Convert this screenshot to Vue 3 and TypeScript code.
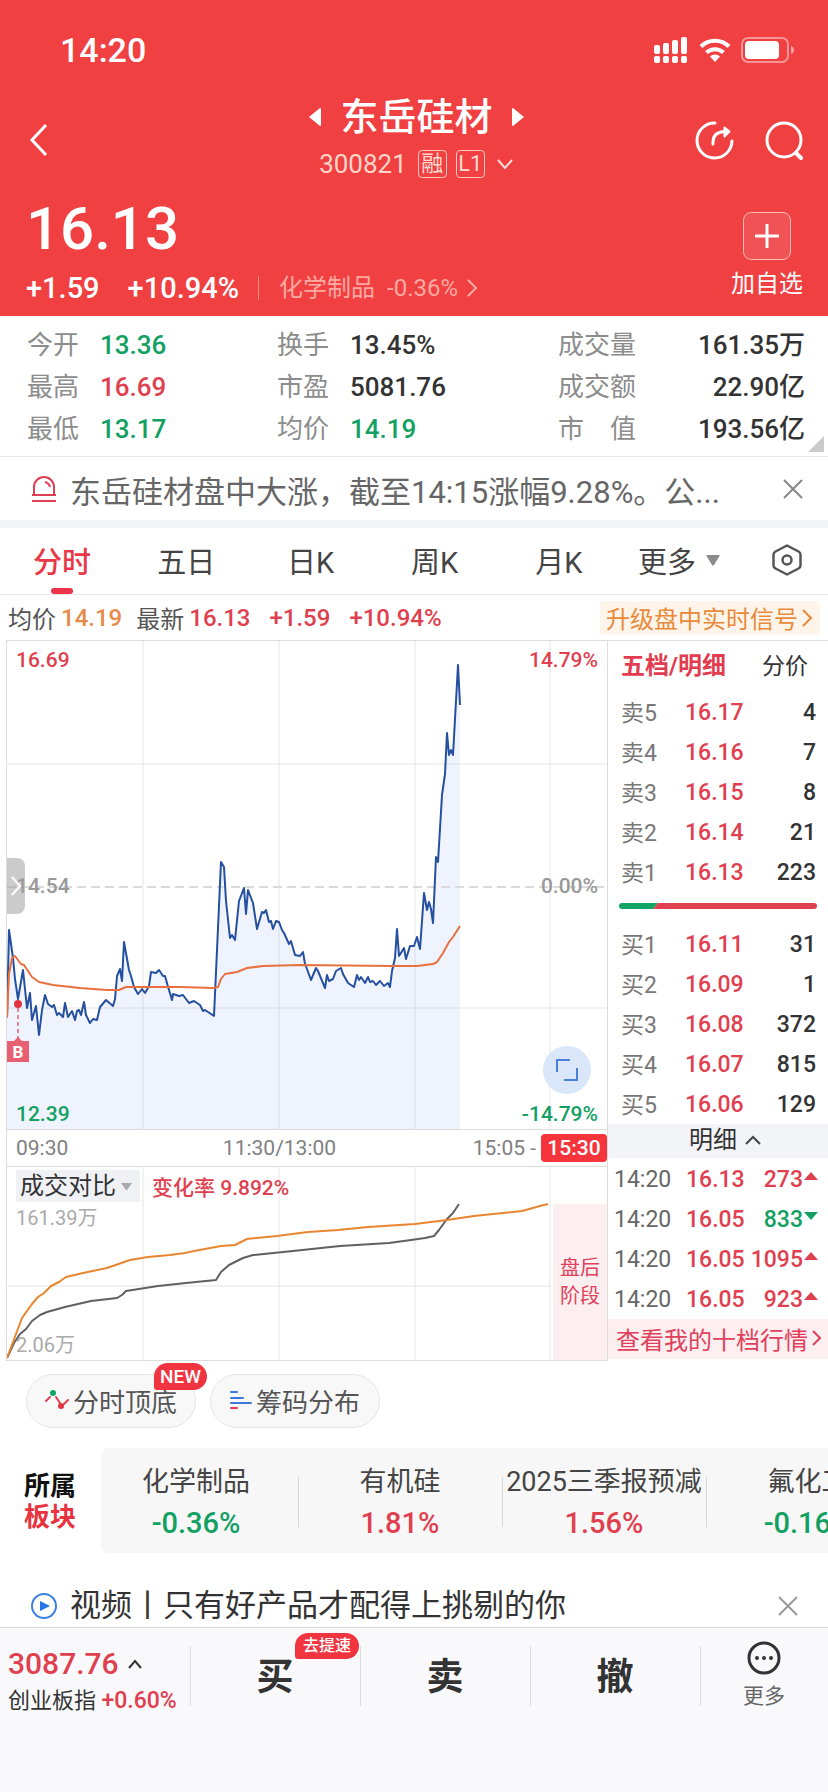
<script setup lang="ts">
import { computed, ref } from 'vue'

type Tone = 'up' | 'down' | 'plain'
type Point = [number, number]

interface Stat { label: string; value: string; tone: Tone }
interface Level { label: string; price: string; volume: string }
interface Trade { time: string; price: string; volume: string; tone: Tone }
interface Board { name: string; change: string; tone: Tone }

const stats: Stat[] = [
  { label: '今开', value: '13.36', tone: 'down' },
  { label: '换手', value: '13.45%', tone: 'plain' },
  { label: '成交量', value: '161.35万', tone: 'plain' },
  { label: '最高', value: '16.69', tone: 'up' },
  { label: '市盈', value: '5081.76', tone: 'plain' },
  { label: '成交额', value: '22.90亿', tone: 'plain' },
  { label: '最低', value: '13.17', tone: 'down' },
  { label: '均价', value: '14.19', tone: 'down' },
  { label: '市　值', value: '193.56亿', tone: 'plain' },
]

const tabs = ['分时', '五日', '日K', '周K', '月K']
const activeTab = ref('分时')

const sells: Level[] = [
  { label: '卖5', price: '16.17', volume: '4' },
  { label: '卖4', price: '16.16', volume: '7' },
  { label: '卖3', price: '16.15', volume: '8' },
  { label: '卖2', price: '16.14', volume: '21' },
  { label: '卖1', price: '16.13', volume: '223' },
]
const buys: Level[] = [
  { label: '买1', price: '16.11', volume: '31' },
  { label: '买2', price: '16.09', volume: '1' },
  { label: '买3', price: '16.08', volume: '372' },
  { label: '买4', price: '16.07', volume: '815' },
  { label: '买5', price: '16.06', volume: '129' },
]
const trades: Trade[] = [
  { time: '14:20', price: '16.13', volume: '273', tone: 'up' },
  { time: '14:20', price: '16.05', volume: '833', tone: 'down' },
  { time: '14:20', price: '16.05', volume: '1095', tone: 'up' },
  { time: '14:20', price: '16.05', volume: '923', tone: 'up' },
]
const boards: Board[] = [
  { name: '化学制品', change: '-0.36%', tone: 'down' },
  { name: '有机硅', change: '1.81%', tone: 'up' },
  { name: '2025三季报预减', change: '1.56%', tone: 'up' },
  { name: '氟化工', change: '-0.16%', tone: 'down' },
]

const price: Point[] = [
  [0, 377], [2, 289], [6, 317], [8, 338], [11, 358], [16, 329], [20, 367], [23, 352], [25, 379], [29, 365],
  [32, 394], [35, 369], [38, 354], [41, 363], [45, 366], [47, 364], [50, 374], [52, 372], [56, 376], [58, 362],
  [61, 376], [65, 370], [68, 379], [70, 370], [72, 369], [74, 374], [77, 361], [79, 374], [83, 382], [86, 378],
  [90, 379], [93, 366], [99, 359], [106, 365], [108, 358], [110, 335], [113, 328], [115, 340], [117, 301],
  [122, 329], [124, 335], [127, 346], [131, 353], [135, 348], [138, 352], [142, 345], [144, 331], [149, 332],
  [152, 329], [156, 335], [158, 335], [162, 349], [165, 359], [166, 353], [172, 355], [176, 354], [182, 362],
  [187, 360], [193, 364], [196, 370], [198, 369], [207, 375], [214, 221], [217, 226], [219, 260], [223, 297],
  [225, 294], [228, 299], [232, 260], [237, 247], [239, 273], [241, 249], [246, 262], [250, 288], [255, 271],
  [257, 272], [259, 269], [262, 281], [264, 280], [266, 288], [269, 280], [272, 281], [275, 289], [277, 292],
  [282, 303], [284, 300], [288, 314], [293, 315], [296, 311], [298, 323], [300, 328], [304, 339], [309, 327],
  [311, 330], [318, 347], [320, 334], [322, 340], [326, 338], [329, 330], [334, 327], [336, 333], [341, 342],
  [347, 346], [350, 334], [352, 339], [354, 336], [358, 342], [361, 336], [363, 341], [366, 340], [369, 344],
  [373, 340], [377, 345], [381, 342], [383, 346], [385, 330], [388, 317], [390, 288], [392, 315], [397, 307],
  [399, 318], [403, 305], [407, 305], [410, 296], [413, 308], [417, 252], [420, 269], [422, 261], [424, 268],
  [426, 282], [429, 216], [431, 221], [435, 154], [438, 133], [440, 92], [442, 114], [444, 109], [446, 114],
  [451, 24], [453, 64],
]
const average: Point[] = [
  [0, 377], [2, 333], [5, 317], [8, 315], [14, 323], [17, 324], [25, 336], [32, 341], [46, 344], [73, 347],
  [100, 349], [112, 349], [119, 346], [143, 346], [173, 346], [206, 347], [211, 346], [214, 338], [218, 333],
  [230, 331], [240, 327], [256, 325], [293, 324], [386, 325], [410, 325], [426, 323], [430, 321], [436, 312],
  [442, 301], [446, 296], [453, 285],
]
const yesterday: Point[] = [
  [0, 191], [9, 167], [15, 151], [25, 137], [31, 130], [37, 126], [44, 119], [52, 115], [59, 110], [76, 106],
  [100, 101], [123, 93], [141, 90], [163, 88], [178, 86], [187, 84], [214, 79], [228, 78], [240, 72], [270, 69],
  [301, 65], [331, 63], [361, 60], [408, 57], [440, 53], [467, 49], [515, 44], [533, 39], [541, 37],
]
const today: Point[] = [
  [0, 191], [7, 176], [13, 167], [19, 162], [25, 154], [33, 148], [40, 145], [58, 140], [84, 134], [110, 131],
  [115, 128], [119, 124], [151, 119], [179, 116], [209, 113], [214, 105], [222, 98], [236, 91], [246, 88],
  [286, 84], [333, 79], [382, 76], [404, 73], [418, 71], [427, 69], [432, 63], [440, 52], [446, 46], [452, 37],
]

const toPoints = (list: Point[]): string => list.map((p) => p.join(',')).join(' ')
const areaPoints = computed(() => `0,488 ${toPoints(price)} 453,488`)
const showNews = ref(true)
const showVideo = ref(true)
const compare = ref('成交对比')
</script>

<template>
  <div class="page">
    <header class="top">
      <div class="status">
        <span class="clock">14:20</span>
        <div class="status-icons">
          <svg width="35" height="26" viewBox="0 0 35 26" fill="#fff">
            <rect x="0" y="8" width="6" height="9" rx="2" /><rect x="9" y="6" width="6" height="11" rx="2" />
            <rect x="18" y="3" width="6" height="14" rx="2" /><rect x="27" y="0" width="6" height="17" rx="2" />
            <rect x="0" y="19" width="6" height="7" rx="2" /><rect x="9" y="19" width="6" height="7" rx="2" />
            <rect x="18" y="19" width="6" height="7" rx="2" /><rect x="27" y="19" width="6" height="7" rx="2" />
          </svg>
          <svg width="32" height="24" viewBox="0 0 32 24" fill="none" stroke="#fff" stroke-width="4">
            <path d="M2 8.500a20 20 0 0 1 28 0" /><path d="M7.500 14.500a12.500 12.500 0 0 1 17 0" />
            <path d="M16 24l-5-5.500a7.500 7.500 0 0 1 10 0z" fill="#fff" stroke="none" />
          </svg>
          <svg width="53" height="26" viewBox="0 0 53 26">
            <rect x="1" y="1" width="46" height="24" rx="6" fill="none" stroke="#fff" stroke-opacity=".45" stroke-width="2" />
            <rect x="4" y="4" width="34" height="18" rx="4" fill="#fff" />
            <path d="M50 9q3 1 3 4t-3 4z" fill="#fff" fill-opacity=".5" />
          </svg>
        </div>
      </div>

      <nav class="nav">
        <button class="bare" aria-label="返回">
          <svg width="20" height="34" viewBox="0 0 20 34" fill="none" stroke="#fff" stroke-width="3"><path d="M17 2L3 17l14 15" /></svg>
        </button>
        <div class="titles">
          <div class="name-row">
            <button class="bare" aria-label="上一只">
              <svg width="14" height="20" viewBox="0 0 14 20" fill="#fff"><path d="M12 1L1 10l11 9q1 0 1-1V2q0-1-1-1z" /></svg>
            </button>
            <h1>东岳硅材</h1>
            <button class="bare" aria-label="下一只">
              <svg width="14" height="20" viewBox="0 0 14 20" fill="#fff"><path d="M2 1l11 9-11 9q-1 0-1-1V2q0-1 1-1z" /></svg>
            </button>
          </div>
          <div class="code-row">
            <span class="code">300821</span><span class="tag">融</span><span class="tag">L1</span>
            <svg class="code-arrow" width="18" height="12" viewBox="0 0 18 12" fill="none" stroke="#fff" stroke-opacity=".8" stroke-width="2"><path d="M2 2l7 8 7-8" /></svg>
          </div>
        </div>
        <div class="nav-actions">
          <button class="bare" aria-label="分享">
            <svg width="40" height="40" viewBox="0 0 40 40" fill="none" stroke="#fff" stroke-width="3" stroke-linecap="round" stroke-linejoin="round">
              <path d="M20 3A17.500 17.500 0 1 0 37 21" /><path d="M18 24v-2q0-10 12-10.500" /><path d="M29.500 7.500l5 4-5 5z" fill="#fff" stroke-width="2" />
            </svg>
          </button>
          <button class="bare" aria-label="搜索">
            <svg width="40" height="40" viewBox="0 0 40 40" fill="none" stroke="#fff" stroke-width="3" stroke-linecap="round">
              <circle cx="20" cy="20" r="17" /><path d="M32 33l5 5" stroke-width="4" />
            </svg>
          </button>
        </div>
      </nav>

      <div class="quote">
        <div class="quote-main">
          <div class="last">16.13</div>
          <div class="change-row">
            <span class="delta">+1.59</span><span class="delta">+10.94%</span>
            <a class="sector" href="#sector"><span>化学制品</span><span>-0.36%</span>
              <svg width="12" height="20" viewBox="0 0 12 20" fill="none" stroke="currentColor" stroke-width="2"><path d="M2 2l8 8-8 8" /></svg>
            </a>
          </div>
        </div>
        <button class="bare watch">
          <span class="plus"><svg width="24" height="24" viewBox="0 0 24 24" stroke="#fff" stroke-width="3" stroke-linecap="round"><path d="M12 1v22M1 12h22" /></svg></span>
          <span>加自选</span>
        </button>
      </div>
    </header>

    <section class="stats">
      <dl v-for="s in stats" :key="s.label" class="stat">
        <dt>{{ s.label }}</dt>
        <dd :class="s.tone">{{ s.value }}</dd>
      </dl>
      <svg class="corner" width="16" height="16" viewBox="0 0 16 16"><path d="M16 0v16H0z" fill="#cacaca" /></svg>
    </section>

    <section v-if="showNews" class="notice news">
      <svg width="26" height="28" viewBox="0 0 26 28" fill="none" stroke="#df3f55" stroke-width="2">
        <path d="M3 20V12a10 10 0 0 1 20 0v8z" /><path d="M1 26h24M1 20h24" /><path d="M14 7q4 1 5 5" />
      </svg>
      <a class="notice-text" href="#news">东岳硅材盘中大涨，截至14:15涨幅9.28%。公...</a>
      <button class="bare" aria-label="关闭" @click="showNews = false">
        <svg width="20" height="20" viewBox="0 0 20 20" stroke="#888" stroke-width="2"><path d="M1 1l18 18M19 1L1 19" /></svg>
      </button>
    </section>

    <nav class="tabs">
      <button v-for="t in tabs" :key="t" class="bare tab" :class="{ active: t === activeTab }" @click="activeTab = t">{{ t }}</button>
      <button class="bare tab more-tab">更多<svg width="14" height="11" viewBox="0 0 14 11" fill="#8c8c8c"><path d="M1 0h12q1 0 .5 1L8 10q-1 1-2 0L.5 1Q0 0 1 0z" /></svg></button>
      <button class="bare tab" aria-label="设置">
        <svg width="30" height="32" viewBox="0 0 30 32" fill="none" stroke="#555" stroke-width="2.500" stroke-linejoin="round">
          <path d="M15 1.500l11.500 6q2 1 2 3v11q0 2-2 3L15 30.500l-11.500-6q-2-1-2-3v-11q0-2 2-3z" /><circle cx="15" cy="16" r="4.500" />
        </svg>
      </button>
    </nav>

    <div class="info">
      <span>均价</span><b class="avg">14.19</b><span class="newest">最新</span><b class="up">16.13</b>
      <b class="up wide">+1.59</b><b class="up wide">+10.94%</b>
      <a class="upgrade" href="#upgrade">升级盘中实时信号<svg width="12" height="20" viewBox="0 0 12 20" fill="none" stroke="currentColor" stroke-width="2"><path d="M2 2l8 8-8 8" /></svg></a>
    </div>

    <main class="market">
      <div class="charts">
        <div class="price-chart">
          <svg class="plot" viewBox="0 0 600 488" fill="none">
            <polygon :points="areaPoints" fill="#eff3fd" />
            <path d="M0 123h600M0 367h600M136 0v488M272 0v488M408 0v488M543 0v488" stroke="#8c8c96" stroke-opacity=".22" />
            <path d="M0 246h600" stroke="#dadada" stroke-width="2" stroke-dasharray="9 5" />
            <polyline :points="toPoints(price)" stroke="#2550a0" stroke-width="2" stroke-linejoin="round" />
            <polyline :points="toPoints(average)" stroke="#e8703f" stroke-width="2" stroke-linejoin="round" />
            <path d="M11 367v32" stroke="#e2566a" stroke-opacity=".7" stroke-width="2" stroke-dasharray="4 3" />
            <circle cx="11" cy="363" r="4" fill="#e03440" />
            <path d="M0 400h7l4-4 4 4h7v21H0z" fill="#e86072" />
            <text x="11" y="417" text-anchor="middle" class="marker">B</text>
          </svg>
          <span class="mark tl up">16.69</span><span class="mark tr up">14.79%</span>
          <span class="mark ml">14.54</span><span class="mark mr">0.00%</span>
          <span class="mark bl down">12.39</span><span class="mark br down">-14.79%</span>
          <button class="bare drawer" aria-label="展开">
            <svg width="12" height="20" viewBox="0 0 12 20" fill="none" stroke="#fff" stroke-width="2"><path d="M2 1l8 9-8 9" /></svg>
          </button>
          <button class="bare expand" aria-label="全屏">
            <svg width="24" height="24" viewBox="0 0 24 24" fill="none" stroke="#4a80dc" stroke-width="2"><path d="M2 14V2h13M22 10v12H9" /></svg>
          </button>
        </div>
        <div class="axis">
          <span>09:30</span><span>11:30/13:00</span>
          <span class="axis-end">15:05 - <em>15:30</em></span>
        </div>
        <div class="volume-chart">
          <svg class="plot" viewBox="0 0 600 193" fill="none">
            <path d="M0 119h543M136 0v193M272 0v193M408 0v193M543 0v193" stroke="#8c8c96" stroke-opacity=".22" />
            <rect x="546" y="37" width="54" height="156" fill="#fdeeef" />
            <polyline :points="toPoints(today)" stroke="#606062" stroke-width="2" stroke-linejoin="round" />
            <polyline :points="toPoints(yesterday)" stroke="#e8862f" stroke-width="2" stroke-linejoin="round" />
          </svg>
          <div class="compare">
            <label class="picker">
              <select v-model="compare" aria-label="副图指标"><option>成交对比</option></select>
              <svg width="11" height="7" viewBox="0 0 11 7" fill="#aaa"><path d="M0 0h11L6 7H5z" /></svg>
            </label>
            <b class="up">变化率 9.892%</b>
          </div>
          <span class="scale hi">161.39万</span><span class="scale lo">2.06万</span>
          <span class="after">盘后<br>阶段</span>
        </div>
      </div>

      <aside class="book">
        <div class="book-tabs">
          <button class="bare on">五档/明细</button><button class="bare">分价</button>
        </div>
        <table class="levels">
          <tbody>
            <tr v-for="l in sells" :key="l.label"><th scope="row">{{ l.label }}</th><td class="up">{{ l.price }}</td><td class="vol">{{ l.volume }}</td></tr>
          </tbody>
        </table>
        <div class="ratio">
          <svg width="100%" height="6" viewBox="0 0 198 6" preserveAspectRatio="none"><path d="M3 0h36l-5 6H3a3 3 0 0 1 0-6z" fill="#12a566" /><path d="M39 0h156a3 3 0 0 1 0 6H34z" fill="#e04150" /></svg>
        </div>
        <table class="levels">
          <tbody>
            <tr v-for="l in buys" :key="l.label"><th scope="row">{{ l.label }}</th><td class="up">{{ l.price }}</td><td class="vol">{{ l.volume }}</td></tr>
          </tbody>
        </table>
        <button class="bare detail">明细<svg width="18" height="10" viewBox="0 0 18 10" fill="none" stroke="#444" stroke-width="2"><path d="M2 9l7-7 7 7" /></svg></button>
        <table class="trades">
          <tbody>
            <tr v-for="(t, i) in trades" :key="i">
              <td class="time">{{ t.time }}</td><td class="up">{{ t.price }}</td>
              <td class="qty" :class="t.tone">{{ t.volume }}<svg width="14" height="8" viewBox="0 0 14 8" fill="currentColor"><path :d="t.tone === 'up' ? 'M7 0l7 8H0z' : 'M0 0h14L7 8z'" /></svg></td>
            </tr>
          </tbody>
        </table>
        <a class="ten" href="#ten">查看我的十档行情<svg width="10" height="18" viewBox="0 0 10 18" fill="none" stroke="currentColor" stroke-width="2"><path d="M1 2l7 7-7 7" /></svg></a>
      </aside>
    </main>

    <div class="tools">
      <button class="bare pill">
        <svg width="24" height="20" viewBox="0 0 24 20" fill="none" stroke="#e04352" stroke-width="2" stroke-linecap="round">
          <path d="M1 11l4-4M11 7l4 6M19 14l4-4" /><circle cx="8" cy="3" r="3" fill="#12a566" stroke="none" /><circle cx="16" cy="16" r="3" fill="#e03440" stroke="none" />
        </svg>分时顶底<span class="badge new">NEW</span>
      </button>
      <button class="bare pill">
        <svg width="22" height="19" viewBox="0 0 22 19" stroke-width="2" stroke-linecap="round"><path d="M1 1h6M1 7h12M1 12h20" stroke="#3d78dc" /><path d="M1 17h6" stroke="#e03a55" /></svg>筹码分布
      </button>
    </div>

    <section id="sector" class="boards">
      <h2>所属<span>板块</span></h2>
      <div class="board-strip">
        <a v-for="b in boards" :key="b.name" class="board" href="#board"><span>{{ b.name }}</span><b :class="b.tone">{{ b.change }}</b></a>
      </div>
    </section>

    <section v-if="showVideo" class="notice video">
      <svg width="26" height="28" viewBox="0 0 26 28"><circle cx="13" cy="14" r="12" fill="none" stroke="#3a80e0" stroke-width="2" /><path d="M9 9l10 5-10 5z" fill="#2474e8" /></svg>
      <a class="notice-text" href="#video">视频丨只有好产品才配得上挑剔的你</a>
      <button class="bare" aria-label="关闭" @click="showVideo = false">
        <svg width="20" height="20" viewBox="0 0 20 20" stroke="#999" stroke-width="2"><path d="M1 1l18 18M19 1L1 19" /></svg>
      </button>
    </section>

    <footer class="bottom">
      <button class="bare index">
        <span class="index-value up">3087.76<svg width="16" height="10" viewBox="0 0 16 10" fill="none" stroke="#333" stroke-width="2"><path d="M2 9l6-7 6 7" /></svg></span>
        <span class="index-name">创业板指 <b class="up">+0.60%</b></span>
      </button>
      <button class="bare act">买<span class="badge speed">去提速</span></button>
      <button class="bare act">卖</button>
      <button class="bare act">撤</button>
      <button class="bare others">
        <svg width="34" height="34" viewBox="0 0 34 34"><circle cx="17" cy="17" r="15" fill="none" stroke="#333" stroke-width="3" /><g fill="#333"><circle cx="10" cy="17" r="2" /><circle cx="17" cy="17" r="2" /><circle cx="24" cy="17" r="2" /></g></svg>
        <span>更多</span>
      </button>
    </footer>
  </div>
</template>

<style>
body { margin: 0; }
</style>

<style scoped>
.page {
  display: flex; flex-direction: column; min-height: 100vh; overflow: hidden;
  background: #fff; color: #333; font-family: Roboto, "Noto Sans CJK SC", sans-serif; font-size: 24px;
}
.page * { box-sizing: border-box; }
.page svg { display: block; flex: none; }
.bare { border: 0; background: none; padding: 0; margin: 0; font: inherit; color: inherit; display: flex; align-items: center; justify-content: center; }
a { color: inherit; text-decoration: none; }
b { font-weight: 500; }
table { width: 100%; border-collapse: collapse; }
th, td { padding: 0; font-weight: 500; text-align: left; }
.up { color: #e03f50; }
.down { color: #12a063; }
.plain { color: #333; }

.top { background: #f04042; color: #fff; }
.status { display: flex; align-items: center; justify-content: space-between; height: 90px; padding: 10px 34px 0 60px; }
.clock { font-size: 34px; font-weight: 500; }
.status-icons { display: flex; align-items: center; gap: 10px; }
.nav { display: grid; grid-template-columns: 1fr auto 1fr; align-items: center; height: 100px; padding: 0 24px 0 29px; }
.nav-actions { display: flex; gap: 29px; justify-content: flex-end; }
.nav > .bare { justify-content: flex-start; }
.titles { padding-bottom: 6px; }
.name-row { display: flex; align-items: center; justify-content: center; gap: 18px; height: 54px; }
h1 { margin: 0; font-size: 38px; font-weight: 500; line-height: 54px; }
.code-row { display: flex; align-items: center; justify-content: center; gap: 9px; height: 40px; }
.code { font-size: 26px; color: #ffd4c9; margin-right: 2px; }
.tag { width: 29px; height: 28px; border: 1px solid #ffc9c0; border-radius: 4px; font-size: 22px; line-height: 26px; display: flex; justify-content: center; color: #ffd9d0; }
.code-arrow { margin-left: 2px; }
.quote { display: flex; justify-content: space-between; padding: 0 25px 8px 26px; }
.last { font-size: 60px; font-weight: 500; line-height: 78px; }
.change-row { display: flex; align-items: center; height: 40px; }
.delta { font-size: 29px; font-weight: 500; margin-right: 28px; }
.sector { display: flex; align-items: center; gap: 12px; color: #ffaaa2; font-size: 24px; line-height: 24px; margin-left: -9px; padding-left: 20px; border-left: 1px solid #f98a85; }
.sector svg { margin-left: -4px; }
.watch { flex-direction: column; justify-content: flex-start; padding-top: 22px; font-size: 24px; line-height: 36px; gap: 6px; }
.plus { width: 48px; height: 48px; border: 1px solid #ffb8b4; border-radius: 8px; background: #f05355; display: flex; align-items: center; justify-content: center; }

.stats { position: relative; display: grid; grid-template-columns: 250fr 281fr 247fr; padding: 8px 23px 6px 27px; border-bottom: 1px solid #e8e8e8; }
.stat { display: flex; margin: 0; line-height: 42px; font-size: 26px; }
.stat dt { color: #8c8c8c; }
.stat dd { margin: 0 0 0 21px; font-weight: 500; }
.stat:nth-child(3n) dd { margin-left: auto; }
.corner { position: absolute; right: 4px; bottom: 4px; }

.notice { display: flex; align-items: center; padding: 0 25px 0 31px; }
.notice-text { flex: 1; margin: 0 13px; font-size: 31px; white-space: nowrap; overflow: hidden; }
.news { height: 71px; padding-top: 1px; border-bottom: 8px solid #f1f5f5; color: #666; }
.video { padding-top: 32px; padding-right: 30px; line-height: 42px; }

.tabs { display: grid; grid-template-columns: repeat(6, 3fr) 2fr; height: 67px; border-bottom: 1px solid #e6e6e6; }
.tab { position: relative; padding-bottom: 2px; font-size: 29px; color: #444; }
.more-tab { padding-right: 8px; }
.more-tab svg { margin-left: 10px; }
.active { color: #e83848; font-weight: 500; }
.active::after { content: ""; position: absolute; left: 50%; bottom: 0; width: 22px; height: 6px; margin-left: -11px; border-radius: 3px; background: #ec3347; }

.info { display: flex; align-items: center; height: 45px; padding: 0 8px; color: #555; white-space: nowrap; }
.info b { margin-left: 5px; }
.info .newest { margin-left: 14px; }
.info .wide { margin-left: 19px; }
.info .avg { color: #e88a4a; }
.upgrade { display: flex; align-items: center; gap: 3px; margin-left: auto; height: 34px; padding: 0 7px 0 6px; border-radius: 4px; background: #fff4ea; color: #e88a3a; }

.market { display: grid; grid-template-columns: minmax(0, 1fr) 220px; }
.charts { margin-left: 6px; border: 1px solid #dcdcdc; }
.price-chart, .volume-chart { position: relative; }
.plot { width: 100%; height: auto; }
.marker { fill: #fff; font: 700 17px Roboto, sans-serif; }
.mark { position: absolute; font-size: 21px; line-height: 24px; font-weight: 500; }
.tl, .ml, .bl { left: 9px; }
.tr, .mr, .br { right: 9px; }
.tl, .tr { top: 7px; }
.ml, .mr { top: 50%; margin-top: -11px; color: #999; }
.bl, .br { bottom: 3px; }
.drawer { position: absolute; left: 0; top: 50%; margin-top: -27px; width: 18px; height: 56px; border-radius: 0 8px 8px 0; background: rgba(160, 160, 160, .55); }
.expand { position: absolute; right: 16px; bottom: 35px; width: 48px; height: 48px; border-radius: 50%; background: #dae6fa; }
.axis { display: grid; grid-template-columns: 35% auto 1fr; align-items: center; height: 38px; padding-left: 9px; border: solid #dcdcdc; border-width: 1px 0; font-size: 21px; color: #808080; }
.axis-end { display: flex; align-items: center; justify-content: flex-end; gap: 5px; }
.axis em { width: 66px; background: #f5343c; color: #fff; font-style: normal; font-weight: 500; line-height: 28px; border-radius: 4px; text-align: center; }
.compare { position: absolute; left: 9px; top: 3px; display: flex; align-items: center; gap: 12px; font-size: 21px; }
.picker { position: relative; display: flex; align-items: center; background: #f0f1f5; }
.picker select { appearance: none; border: 0; background: none; margin: 0; padding: 0 24px 0 4px; height: 32px; font: inherit; font-size: 24px; color: #333; }
.picker svg { position: absolute; right: 8px; pointer-events: none; }
.scale { position: absolute; left: 9px; font-size: 20px; line-height: 24px; color: #aaa; }
.hi { top: 39px; }
.lo { bottom: 3px; }
.after { position: absolute; right: 0; bottom: 50px; width: 9%; text-align: center; font-size: 20px; line-height: 28px; color: #e0405c; }

.book { border-top: 1px solid #dcdcdc; font-size: 23px; }
.book-tabs { display: flex; justify-content: space-between; height: 51px; padding: 0 20px 6px 13px; }
.book-tabs .on { color: #e23c50; font-size: 24px; font-weight: 700; }
.levels, .trades { table-layout: fixed; }
.levels tr, .trades tr { height: 40px; }
.levels th { width: 77px; padding: 0 0 3px 13px; font-weight: 400; color: #777; }
.vol { text-align: right; padding-right: 12px; }
.ratio { padding: 11px 11px 15px; }
.detail { width: 100%; height: 34px; padding: 0 0 3px 15px; gap: 7px; margin-bottom: 1px; background: #f3f4f8; font-size: 24px; line-height: 30px; }
.time { width: 78px; padding-left: 6px; color: #666; }
.trades .time { font-weight: 400; }
.trades td:nth-child(2) { width: 60px; }
.qty { text-align: right; padding-right: 10px; }
.qty svg { display: inline-block !important; margin-left: 1px; vertical-align: 7px; }
.ten { display: flex; align-items: center; justify-content: space-between; height: 40px; padding: 0 6px 2px 8px; background: #fdeeef; color: #e0405c; font-size: 24px; }

.tools { display: flex; gap: 14px; padding: 13px 26px 0; }
.pill { position: relative; width: 170px; height: 54px; padding-bottom: 2px; border: 1px solid #e6e6e8; border-radius: 27px; background: #f8f8f9; font-size: 26px; color: #555; gap: 4px; }
.badge { position: absolute; background: #f03440; color: #fff; }
.new { right: -12px; top: -12px; width: 53px; height: 27px; border-radius: 14px 14px 14px 3px; font-size: 19px; line-height: 27px; font-weight: 500; }
.boards { display: flex; margin-top: 20px; }
h2 { flex: none; width: 101px; margin: 0; padding: 23px 0 0 24px; font-size: 26px; line-height: 31px; font-weight: 700; color: #111; }
h2 span { display: block; color: #e8333f; }
.board-strip { flex: 1; min-width: 0; display: flex; overflow: hidden; padding: 14px 0 9px; border-radius: 8px 0 0 8px; background: #f7f7f7; }
.board { position: relative; flex: none; width: 204px; display: flex; flex-direction: column; align-items: center; font-size: 27px; line-height: 41px; white-space: nowrap; color: #444; }
.board:first-child { width: 197px; padding-right: 7px; }
.board + .board::before { content: ""; position: absolute; left: 0; top: 15px; width: 1px; height: 50px; background: #d6d6d6; }
.board b { font-size: 29px; }

.bottom { flex: 1; display: grid; grid-template-columns: 190fr 170fr 170fr 170fr 128fr; align-items: start; padding-top: 10px; border-top: 1px solid #d8d8d8; background: #f9f9fb; }
.bottom > * { position: relative; height: 80px; }
.bottom > * + *::before { content: ""; position: absolute; left: 0; top: 8px; width: 1px; height: 60px; background: #dcdcdc; }
.index { flex-direction: column; align-items: flex-start; padding: 0 0 0 8px; white-space: nowrap; }
.index-value { display: flex; align-items: center; gap: 8px; font-size: 30px; line-height: 40px; font-weight: 500; padding-top: 6px; }
.index-name { font-size: 22px; line-height: 34px; }
.index-name b { font-size: 23px; }
.act { padding-bottom: 8px; font-size: 37px; font-weight: 700; }
.speed { right: 1px; top: -5px; width: 64px; height: 26px; border-radius: 13px 13px 13px 3px; font-size: 16px; line-height: 26px; font-weight: 500; }
.others { flex-direction: column; justify-content: flex-start; padding-top: 3px; font-size: 21px; color: #666; gap: 5px; }
.others span { line-height: 32px; }
</style>
